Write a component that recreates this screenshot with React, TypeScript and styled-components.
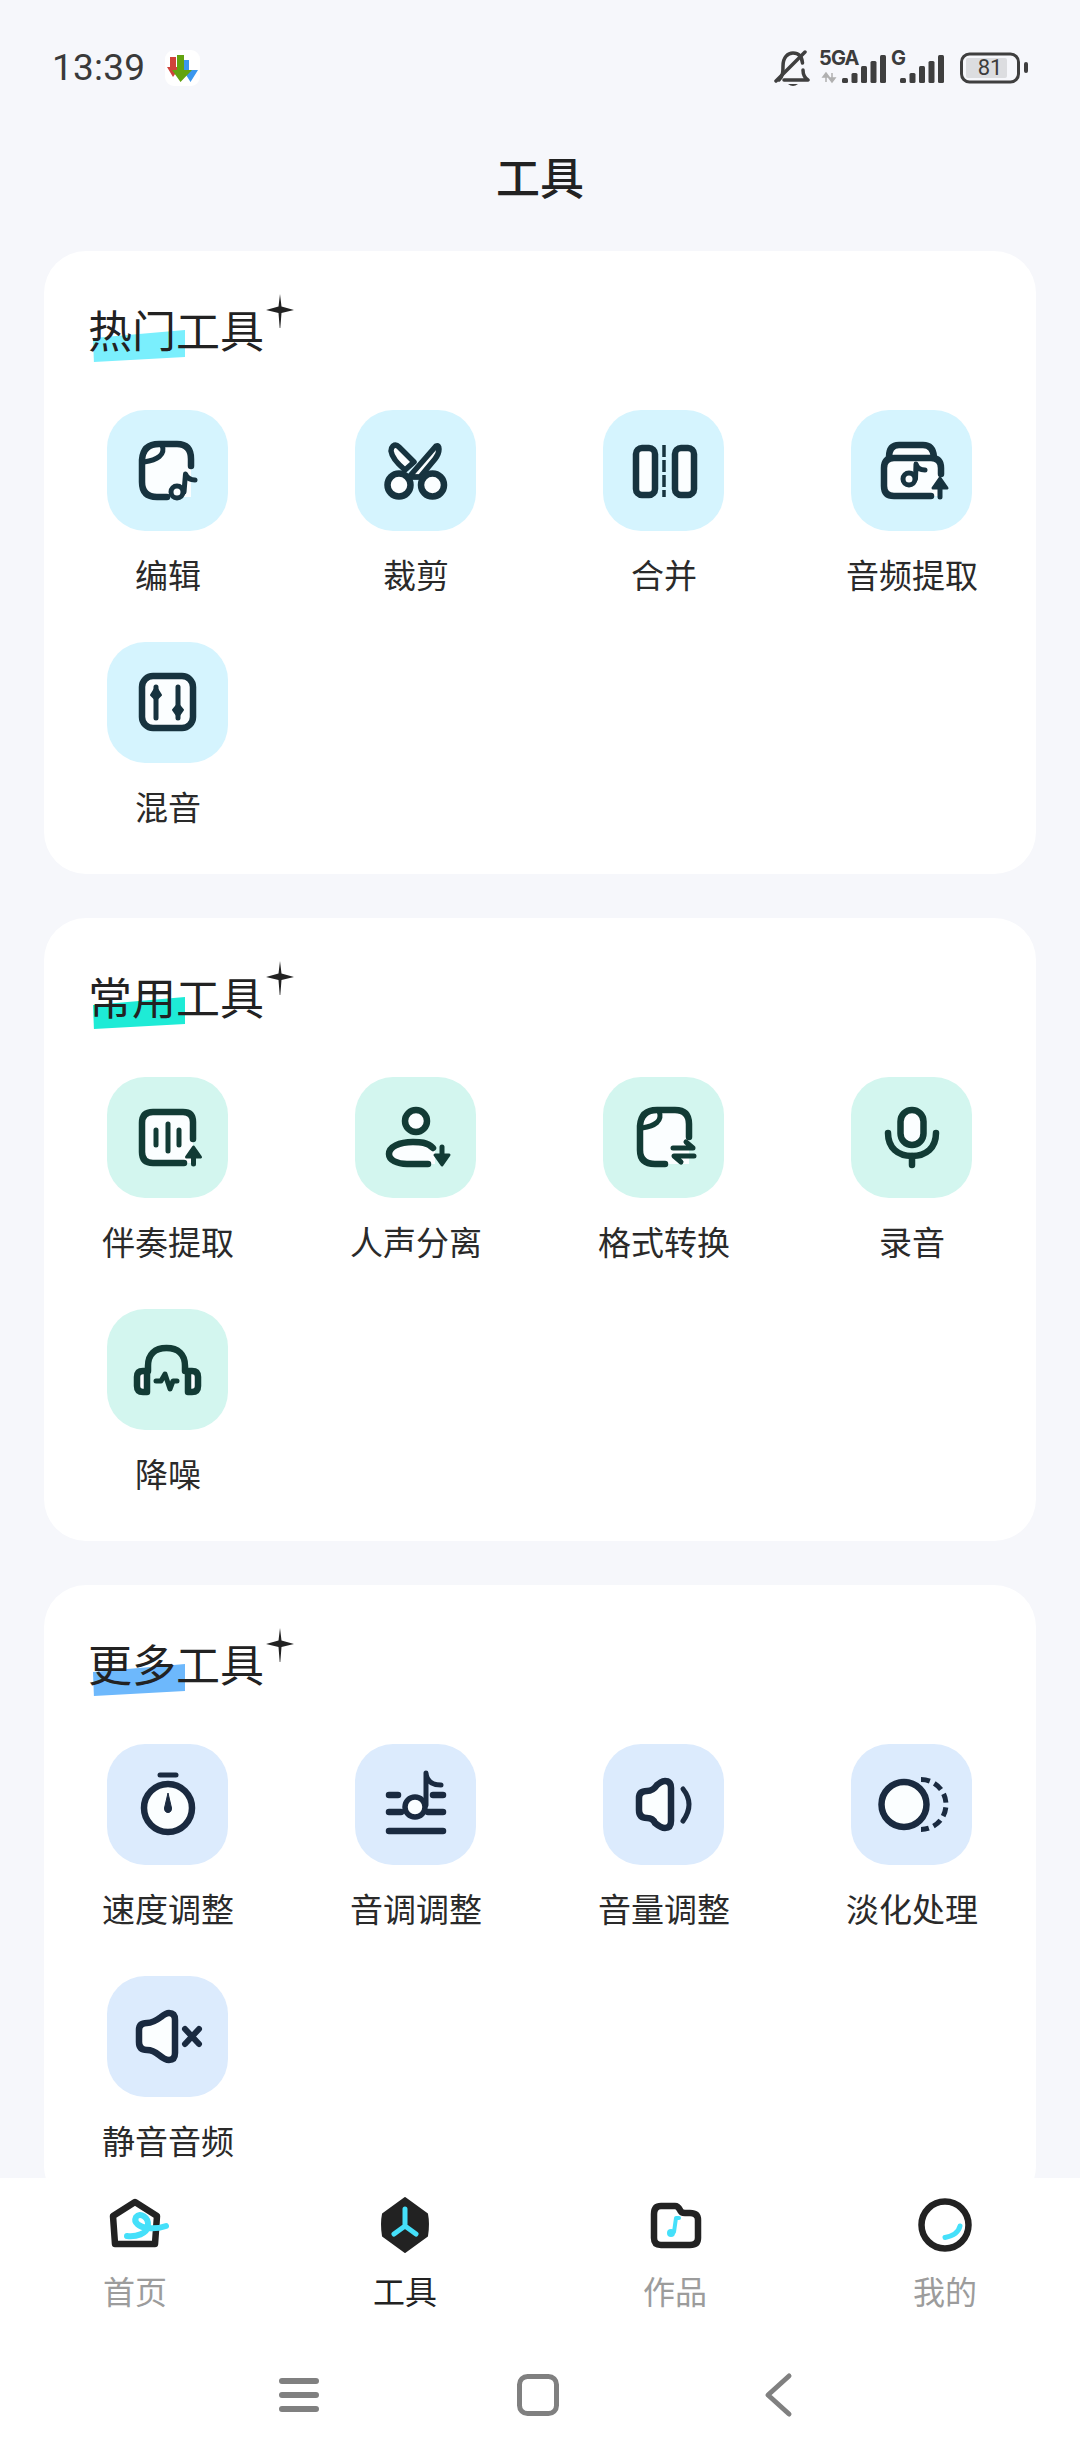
import React from "react";
import styled, { createGlobalStyle } from "styled-components";

const FONT = `"Noto Sans CJK SC", "Noto Sans", sans-serif`;

const Global = createGlobalStyle`
  html, body { margin: 0; padding: 0; background: #f6f7fb; }
  * { box-sizing: border-box; }
`;

const Screen = styled.div`
  width: 1080px;
  height: 2460px;
  display: flex;
  flex-direction: column;
  overflow: hidden;
  background: #f6f7fb;
  font-family: ${FONT};
  color: #222;
`;

const Scroll = styled.main`
  flex: 1;
  min-height: 0;
  overflow: hidden;
`;

const StatusBar = styled.div`
  height: 136px;
  padding: 0 51px 0 52px;
  display: flex;
  align-items: center;
  justify-content: space-between;
`;

const StatusLeft = styled.div`
  display: flex;
  align-items: center;
  gap: 20px;
`;

const Clock = styled.span`
  font-family: Roboto, sans-serif;
  font-size: 37px;
  line-height: 44px;
  color: #3a3a3a;
  letter-spacing: 0.2px;
`;

const AppBadge = styled.svg`
  width: 35px;
  height: 36px;
  display: block;
`;

const StatusRight = styled.div`
  display: flex;
  align-items: center;
`;

const Bell = styled.svg`
  width: 36px;
  height: 38px;
  display: block;
  margin-right: 9px;
`;

const SignalGroup = styled.div<{ $w: number; $mr: number }>`
  position: relative;
  width: ${(p) => p.$w}px;
  height: 36px;
  margin-right: ${(p) => p.$mr}px;
  svg { display: block; width: 100%; height: 100%; }
`;

const NetLabel = styled.span`
  position: absolute;
  left: 0;
  top: -2px;
  font-family: Inter, sans-serif;
  font-weight: 700;
  font-size: 20px;
  line-height: 20px;
  letter-spacing: -0.8px;
  color: #3c3c3c;
`;

const Battery = styled.div`
  position: relative;
  width: 70px;
  height: 32px;
  svg { display: block; width: 100%; height: 100%; }
`;

const BatteryText = styled.span`
  position: absolute;
  left: 6px;
  top: 0;
  width: 50px;
  text-align: center;
  font-family: Roboto, sans-serif;
  font-size: 22px;
  line-height: 32px;
  color: #3c3c3c;
`;

const PageTitle = styled.h1`
  margin: 0;
  height: 84px;
  padding-bottom: 5px;
  display: flex;
  align-items: center;
  justify-content: center;
  font-size: 44px;
  font-weight: 500;
  color: #222;
`;

const Sections = styled.div`
  padding: 31px 44px 0;
  display: flex;
  flex-direction: column;
  gap: 44px;
`;

const Card = styled.section`
  background: #fff;
  border-radius: 42px;
  padding: 48px 0 46px;
`;

const TitleWrap = styled.div`
  position: relative;
  width: fit-content;
  margin: 0 0 51px 44px;
`;

const CardTitle = styled.h2`
  position: relative;
  margin: 0;
  font-size: 44px;
  line-height: 60px;
  font-weight: 400;
  color: #222;
`;

const Mark = styled.span<{ $color: string }>`
  position: absolute;
  left: 5px;
  top: 31px;
  width: 92px;
  height: 32px;
  background: ${(p) => p.$color};
  clip-path: polygon(0 25%, 100% 0, 100% 84%, 1% 100%);
`;

const Sparkle = styled.svg`
  position: absolute;
  left: 178px;
  top: -5px;
  width: 28px;
  height: 34px;
`;

const Grid = styled.div`
  display: grid;
  grid-template-columns: repeat(4, 248px);
  row-gap: 46px;
`;

const Tool = styled.div`
  display: flex;
  flex-direction: column;
  align-items: center;
`;

const Tile = styled.div<{ $bg: string; $fg: string }>`
  width: 121px;
  height: 121px;
  margin-right: 1px;
  border-radius: 38px;
  background: ${(p) => p.$bg};
  color: ${(p) => p.$fg};
  svg { display: block; width: 100%; height: 100%; }
`;

const ToolLabel = styled.span`
  margin-top: 21px;
  font-size: 33px;
  line-height: 44px;
  color: #2a2a2a;
  white-space: nowrap;
`;

const BottomBar = styled.footer`
  flex: none;
  background: #fff;
  position: relative;
`;

const Tabs = styled.nav`
  display: grid;
  grid-template-columns: repeat(4, 270px);
  padding-top: 12px;
`;

const Tab = styled.div`
  display: flex;
  flex-direction: column;
  align-items: center;
`;

const TabIcon = styled.svg`
  display: block;
  width: 70px;
  height: 70px;
`;

const TabLabel = styled.span<{ $active?: boolean }>`
  margin: 8px 0 2px;
  font-size: 32px;
  line-height: 44px;
  color: ${(p) => (p.$active ? "#222" : "#9c9c9c")};
`;

const SystemNav = styled.div`
  height: 146px;
  padding-top: 16px;
  padding-right: 4px;
  display: flex;
  align-items: center;
  justify-content: center;
  gap: 192px;
`;

const SysIcon = styled.svg`
  display: block;
  width: 48px;
  height: 48px;
`;

const PAPER = "#fbfeff";
const S = { fill: "none", stroke: "currentColor", strokeWidth: 6.5, strokeLinecap: "round", strokeLinejoin: "round" } as const;
const SW = { ...S, fill: PAPER };
const Fine = { ...S, strokeWidth: 5 };
const Solid = { fill: "currentColor", stroke: "currentColor", strokeWidth: 2, strokeLinejoin: "round" } as const;

const Ic = ({ children }: { children: React.ReactNode }) => <svg viewBox="0 0 121 121">{children}</svg>;

const UpArrow = ({ x, y1, y2 }: { x: number; y1: number; y2: number }) => (
  <g>
    <path d={`M${x} ${y1} L${x + 7} ${y1 + 10} H${x - 7} Z`} {...Solid} strokeWidth={3} />
    <path d={`M${x} ${y1 + 8} V${y2}`} {...Fine} />
  </g>
);

const DownArrow = ({ x, y1, y2 }: { x: number; y1: number; y2: number }) => (
  <g>
    <path d={`M${x} ${y2} L${x + 7} ${y2 - 10} H${x - 7} Z`} {...Solid} strokeWidth={3} />
    <path d={`M${x} ${y1} V${y2 - 8}`} {...Fine} />
  </g>
);

const Speaker = ({ left }: { left: number }) => (
  <path
    d={`M${left} 54Q${left} 47 ${left + 8} 47Q${left + 14} 47 54 41Q59 37 62 37Q68 37 68 44V77Q68 84 62 84Q58 84 52 79Q${left + 14} 74 ${left + 8} 74Q${left} 74 ${left} 66Z`}
    {...SW}
  />
);

const icons: Record<string, React.ReactNode> = {
  edit: (
    <Ic>
      <path d="M52 34H70Q84 34 84 49V87H50Q35 87 35 72V50Q36 34 52 34Z" fill={PAPER} />
      <path d="M84 56V49Q84 34 70 34H52Q36 34 35 50V72Q35 87 50 87H60" {...S} />
      <path d="M55 35C59 45 50 50 37 52" {...Fine} />
      <circle cx="70" cy="82" r="6" {...Fine} />
      <path d="M77 82L78.5 64Q81 70 88 70" {...Fine} />
    </Ic>
  ),
  cut: (
    <Ic>
      <path d="M38 36Q41 34 44 37L59 52L50 60Q37 49 36 41Q36 38 38 36Z" {...SW} strokeWidth={5.5} />
      <path d="M81 36Q84 35 84 39Q84 44 80 49L65 67H54Z" {...SW} strokeWidth={5.5} />
      <circle cx="44" cy="75" r="11.5" {...SW} />
      <circle cx="77.500" cy="75" r="11.5" {...SW} />
      <path d="M54 67H68" {...Fine} />
    </Ic>
  ),
  merge: (
    <Ic>
      <rect x="33" y="38" width="19" height="47" rx="6" {...SW} />
      <rect x="72" y="38" width="19" height="47" rx="6" {...SW} />
      <path d="M61 35V87" {...S} strokeWidth={3.5} strokeLinecap="butt" strokeDasharray="12 3" />
    </Ic>
  ),
  extract: (
    <Ic>
      <path d="M38 47Q38 35 48 35H72Q82 35 83 47" {...SW} />
      <path d="M43 48H80Q90 48 90 58V86H43Q33 86 33 76V58Q33 48 43 48Z" fill={PAPER} />
      <path d="M90 64V58Q90 48 80 48H43Q33 48 33 58V76Q33 86 43 86H80" {...S} />
      <circle cx="58" cy="69" r="6" {...Fine} />
      <path d="M64.5 69L65 54Q67 60 74 60" {...Fine} />
      <UpArrow x={89} y1={68} y2={87} />
    </Ic>
  ),
  mix: (
    <Ic>
      <rect x="35" y="34" width="51" height="52" rx="11" {...SW} />
      <path d="M49 45V76M71 45V76" {...Fine} />
      <path d="M49 45L54 53L49 58L44 53Z" {...Solid} />
      <path d="M71 62L76 68L71 75L66 68Z" {...Solid} />
    </Ic>
  ),
  accomp: (
    <Ic>
      <path d="M46 35H76Q86 35 86 45V86H46Q35 86 35 75V46Q35 35 46 35Z" fill={PAPER} />
      <path d="M86 62V45Q86 35 76 35H46Q35 35 35 46V75Q35 86 46 86H77" {...S} />
      <path d="M49 53V68M61 47V74M72 53V68" {...Fine} />
      <UpArrow x={86.5} y1={70} y2={87} />
    </Ic>
  ),
  vocal: (
    <Ic>
      <circle cx="61" cy="44" r="11" {...SW} />
      <path d="M58 65C44 65 34 70 34 77C34 83 42 87 52 87H80V71C72 65 65 65 58 65Z" fill={PAPER} />
      <path d="M78 71C72 65 65 65 58 65C44 65 34 70 34 77C34 83 42 87 52 87H73" {...S} />
      <DownArrow x={87} y1={70} y2={88} />
    </Ic>
  ),
  convert: (
    <Ic>
      <path d="M54 33H72Q86 33 86 47V87H52Q37 87 37 73V49Q38 33 54 33Z" fill={PAPER} />
      <path d="M86 60V47Q86 33 72 33H54Q38 33 37 49V73Q37 87 52 87H62" {...S} />
      <path d="M56 34C60 44 52 49 39 51" {...Fine} />
      <path d="M70 71H90L83 65" {...Fine} />
      <path d="M91 79H71L78 85" {...Fine} />
    </Ic>
  ),
  mic: (
    <Ic>
      <rect x="49.500" y="33" width="23" height="35" rx="11.500" {...SW} />
      <path d="M37 56C37 71 47 79 61 79C75 79 85 71 85 56" {...S} />
      <path d="M61 79V88" {...S} />
    </Ic>
  ),
  denoise: (
    <Ic>
      <path d="M41 62V57C41 45 48 39 59.500 39C71 39 78 45 78 57V62" {...S} />
      <path d="M40 62V83H36Q30 83 30 77V68Q30 62 36 62Z" {...SW} />
      <path d="M81 62V83H85Q91 83 91 77V68Q91 62 85 62Z" {...SW} />
      <path d="M49 72H54L58 65L63 80L66 72H70" {...Fine} />
    </Ic>
  ),
  speed: (
    <Ic>
      <circle cx="61" cy="64" r="24" {...SW} />
      <path d="M53 31H69" {...S} strokeWidth={5} />
      <path d="M61 49L64.500 64A3.500 4.500 0 1 1 57.500 64Z" {...Solid} strokeWidth={1} />
    </Ic>
  ),
  pitch: (
    <Ic>
      <circle cx="60" cy="63" r="10" {...SW} strokeWidth={5.500} />
      <path d="M71 61V29Q72 41 86 41" {...Fine} />
      <path d="M34 51H43M78 51H88M34 68H46M73 68H88M34 87H88" {...S} />
    </Ic>
  ),
  volume: (
    <Ic>
      <Speaker left={36} />
      <path d="M80 45Q92 60 80 77" {...Fine} />
    </Ic>
  ),
  fade: (
    <Ic>
      <circle cx="53" cy="60.500" r="22.500" {...SW} />
      <path d="M70 35.500A25 25 0 0 1 70 85.500" {...Fine} strokeDasharray="9 5" strokeLinecap="butt" />
    </Ic>
  ),
  mute: (
    <Ic>
      <Speaker left={32} />
      <path d="M78 53L92 68M92 53L78 68" {...S} strokeWidth={6} />
    </Ic>
  ),
};

interface ToolItem { key: string; label: string }
interface Section { title: string; mark: string; bg: string; fg: string; tools: ToolItem[] }

const sections: Section[] = [
  {
    title: "热门工具", mark: "#7aeffd", bg: "#d5f4fe", fg: "#17333f",
    tools: [
      { key: "edit", label: "编辑" },
      { key: "cut", label: "裁剪" },
      { key: "merge", label: "合并" },
      { key: "extract", label: "音频提取" },
      { key: "mix", label: "混音" },
    ],
  },
  {
    title: "常用工具", mark: "#1eebd6", bg: "#d3f6ef", fg: "#123b35",
    tools: [
      { key: "accomp", label: "伴奏提取" },
      { key: "vocal", label: "人声分离" },
      { key: "convert", label: "格式转换" },
      { key: "mic", label: "录音" },
      { key: "denoise", label: "降噪" },
    ],
  },
  {
    title: "更多工具", mark: "#6db8fc", bg: "#dcebfd", fg: "#1a2a40",
    tools: [
      { key: "speed", label: "速度调整" },
      { key: "pitch", label: "音调调整" },
      { key: "volume", label: "音量调整" },
      { key: "fade", label: "淡化处理" },
      { key: "mute", label: "静音音频" },
    ],
  },
];

const BAR_TOPS = [28, 23, 16, 11, 5];

const Bars = ({ x0 }: { x0: number }) => (
  <>
    {BAR_TOPS.map((top, i) => (
      <rect key={i} x={x0 + i * 9.5} y={top} width="6" height={33 - top} rx="1.500" fill="#3f3f3f" />
    ))}
  </>
);

const tabGlyph = { fill: "none", stroke: "#222", strokeWidth: 6.5, strokeLinejoin: "round", strokeLinecap: "round" } as const;
const cyan = { fill: "none", stroke: "#45e0fa", strokeWidth: 6, strokeLinecap: "round", strokeLinejoin: "round" } as const;

export default function App() {
  return (
    <Screen>
      <Global />
      <Scroll>
        <StatusBar>
          <StatusLeft>
            <Clock>13:39</Clock>
            <AppBadge viewBox="0 0 35 36">
              <rect width="35" height="36" rx="9" fill="#fff" />
              <path d="M5 7H11V17H15L8 27L2 17H5Z" fill="#d0423a" />
              <path d="M18 10H24V20H33L25.500 32L18 20Z" fill="#3b97ee" />
              <path d="M12 5H19V20H27L15.500 32L7 20H12Z" fill="#62a30f" />
            </AppBadge>
          </StatusLeft>
          <StatusRight>
            <Bell viewBox="0 0 36 38">
              <path d="M5 31C9 27 9 23 9 17C9 8 14 4 19 4C25 4 28 8 28.500 14M29 21C29 26 31 29 34 31H10" fill="none" stroke="#3f3f3f" strokeWidth="3.500" strokeLinecap="round" strokeLinejoin="round" />
              <path d="M2 32L31 3" fill="none" stroke="#3f3f3f" strokeWidth="3.500" strokeLinecap="round" />
              <path d="M14 35H24Q19 39 14 35Z" fill="#3f3f3f" />
            </Bell>
            <SignalGroup $w={67} $mr={5}>
              <NetLabel>5GA</NetLabel>
              <svg viewBox="0 0 67 36">
                <path d="M7 23V32M7 23L4 27H10ZM13 32V23M13 32L10 28H16Z" fill="#b0b0b0" stroke="#b0b0b0" strokeWidth="1.500" />
                <Bars x0={23} />
              </svg>
            </SignalGroup>
            <SignalGroup $w={54} $mr={14}>
              <NetLabel>G</NetLabel>
              <svg viewBox="0 0 54 36">
                <Bars x0={9} />
              </svg>
            </SignalGroup>
            <Battery>
              <svg viewBox="0 0 70 32">
                <rect x="2.500" y="2" width="57" height="28" rx="8" fill="none" stroke="#3f3f3f" strokeWidth="3" />
                <rect x="7" y="6" width="41" height="20" rx="2" fill="#dcdde0" />
                <rect x="65" y="10" width="4" height="11" rx="2" fill="#3f3f3f" />
              </svg>
              <BatteryText>81</BatteryText>
            </Battery>
          </StatusRight>
        </StatusBar>
        <PageTitle>工具</PageTitle>
        <Sections>
          {sections.map((s) => (
            <Card key={s.title}>
              <TitleWrap>
                <Mark $color={s.mark} />
                <CardTitle>{s.title}</CardTitle>
                <Sparkle viewBox="0 0 28 34">
                  <path d="M14 0L15.500 12.500L28 16L15.500 19L14.300 34H13.700L12.500 19L0 16L12.500 12.500Z" fill="#222" />
                </Sparkle>
              </TitleWrap>
              <Grid>
                {s.tools.map((t) => (
                  <Tool key={t.key}>
                    <Tile $bg={s.bg} $fg={s.fg}>{icons[t.key]}</Tile>
                    <ToolLabel>{t.label}</ToolLabel>
                  </Tool>
                ))}
              </Grid>
            </Card>
          ))}
        </Sections>
      </Scroll>
      <BottomBar>
        <Tabs>
          <Tab>
            <TabIcon viewBox="0 0 70 70">
              <path d="M35 12L57 26L55 54H15L13 26Z" {...tabGlyph} />
              <path d="M27 46C36 47 47 44 48 36C49 27 40 22 36 27C33 33 40 37 47 38C54 39 60 38 66 36" {...cyan} />
            </TabIcon>
            <TabLabel>首页</TabLabel>
          </Tab>
          <Tab>
            <TabIcon viewBox="0 0 70 70">
              <path d="M35 8L57 24Q59 34 57 46L35 62L13 46Q11 34 13 24Z" fill="#222" stroke="#222" strokeWidth="2" strokeLinejoin="round" />
              <path d="M35 19V36L24 44M35 36L46 44" {...cyan} strokeWidth={5} />
            </TabIcon>
            <TabLabel $active>工具</TabLabel>
          </Tab>
          <Tab>
            <TabIcon viewBox="0 0 70 70">
              <path d="M14 24Q14 16 21 16H35Q38 16 40 20Q41 23 45 23H50Q58 23 58 30V48Q58 55 50 55H21Q14 55 14 48Z" {...tabGlyph} />
              <circle cx="31" cy="43" r="4" fill="#45e0fa" />
              <path d="M34 42L36 28H39" {...cyan} strokeWidth={4} />
            </TabIcon>
            <TabLabel>作品</TabLabel>
          </Tab>
          <Tab>
            <TabIcon viewBox="0 0 70 70">
              <circle cx="35" cy="35" r="23.500" {...tabGlyph} />
              <path d="M50 36Q48 45 35 47.500" {...cyan} strokeWidth={5} />
            </TabIcon>
            <TabLabel>我的</TabLabel>
          </Tab>
        </Tabs>
        <SystemNav>
          <SysIcon viewBox="0 0 48 48">
            <path d="M8 10H42M8 24H42M8 38H42" fill="none" stroke="#808080" strokeWidth="6" strokeLinecap="round" />
          </SysIcon>
          <SysIcon viewBox="0 0 48 48">
            <rect x="5.500" y="5.500" width="37" height="37" rx="8" fill="none" stroke="#808080" strokeWidth="5" />
          </SysIcon>
          <SysIcon viewBox="0 0 48 48">
            <path d="M35 5L14 24L35 43" fill="none" stroke="#808080" strokeWidth="5" strokeLinecap="round" strokeLinejoin="round" />
          </SysIcon>
        </SystemNav>
      </BottomBar>
    </Screen>
  );
}
